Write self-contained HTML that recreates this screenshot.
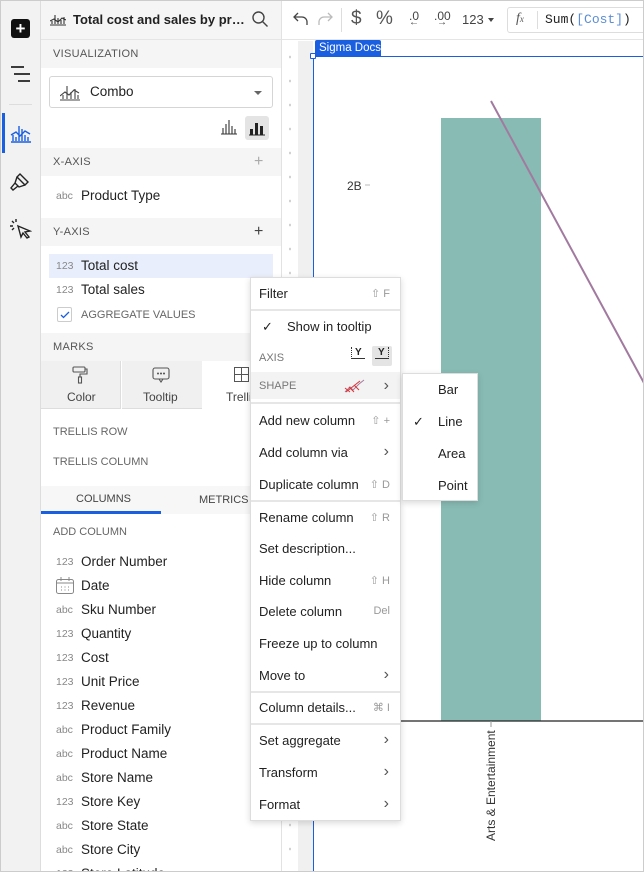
<!DOCTYPE html>
<html><head><meta charset="utf-8"><style>
*{box-sizing:border-box;margin:0;padding:0}
body{width:644px;height:872px;overflow:hidden;font-family:"Liberation Sans",sans-serif;color:#222;background:#fff;position:relative}
.abs{position:absolute}
.rail{left:0;top:0;width:41px;height:872px;background:#f2f2f2;border-right:1px solid #ddd}
.panel{left:41px;top:0;width:241px;height:872px;background:#fff;border-right:1px solid #e2e2e2;overflow:hidden}
.hdr{background:#f5f5f5;font-size:11px;color:#555;letter-spacing:.3px;padding-left:12px;display:flex;align-items:center;position:absolute;left:0;width:240px;height:28px}
.t{position:absolute;font-size:13px;white-space:nowrap}
.ty{position:absolute;font-size:10.5px;color:#888;white-space:nowrap}
.menu{left:250px;top:277px;width:151px;height:544px;background:#fff;border:1px solid #ddd;box-shadow:0 2px 6px rgba(0,0,0,.15)}
.mi{position:absolute;left:8px;font-size:13px;white-space:nowrap;color:#222}
.sc{position:absolute;right:10px;font-size:11px;color:#999}
.ch{position:absolute;right:11px;font-size:16px;color:#555}
.sep{position:absolute;left:0;width:149px;height:2px;background:#e6e6e6}
.sub{left:402px;top:373px;width:76px;height:128px;background:#fff;border:1px solid #ddd;box-shadow:0 2px 6px rgba(0,0,0,.15)}
</style></head><body>
<div class="abs rail"></div>
<div class="abs" style="left:11px;top:19px;width:19px;height:19px;background:#111;border-radius:3px;color:#fff;font-size:17px;font-weight:bold;line-height:19px;text-align:center">+</div>
<svg class="abs" style="left:10px;top:66px" width="22" height="16"><path d="M1 1h13M4 8h16M8 15h12" stroke="#222" stroke-width="1.8"/></svg>
<div class="abs" style="left:9px;top:104px;width:23px;height:1px;background:#ddd"></div>
<div class="abs" style="left:2px;top:113px;width:3px;height:40px;background:#1a5fe0"></div>
<svg class="abs" style="left:10px;top:123px" width="22" height="20" fill="none" stroke="#1a5fe0" stroke-width="1.4"><path d="M1 19h20M3 18v-6M6 18v-4M9 18V3M12 18V6M15 18v-6M18 18v-4M1 12l5-3 4 4 5-5 5 3"/></svg>
<svg class="abs" style="left:10px;top:172px" width="20" height="20" fill="none" stroke="#222" stroke-width="1.4"><path d="M10 2l8 8-3 3-8-8zM7 5l-2 6 4 4 6-2M5 11l-4 5 2 2 5-4"/></svg>
<svg class="abs" style="left:10px;top:219px" width="22" height="20" fill="none" stroke="#222" stroke-width="1.4"><path d="M8 7l12 5-5 1 4 5-2 1-4-5-2 4z M2 2l2 2M6 0v3M0 7h3M2 11l2-2"/></svg>

<div class="abs panel">
  <div class="abs" style="left:0;top:0;width:240px;height:40px;background:#f5f5f5;border-bottom:1px solid #e5e5e5"></div>
  <svg class="abs" style="left:9px;top:12px" width="16" height="14" fill="none" stroke="#333" stroke-width="1.1"><path d="M0 13h16M2 12V9M5 12V3M8 12V6M11 12V8M14 12V5M0 9l4-2 4 3 4-4 4 2"/></svg>
  <div class="t" style="left:32px;top:12px;font-weight:bold;font-size:13px;width:172px;overflow:hidden;text-overflow:ellipsis">Total cost and sales by product type</div>
  <svg class="abs" style="left:211px;top:11px" width="16" height="16" fill="none" stroke="#444" stroke-width="1.4"><circle cx="6.5" cy="6.5" r="5.5"/><path d="M10.5 10.5l5 5"/></svg>
  <div class="hdr" style="top:40px">VISUALIZATION</div>
  <div class="abs" style="left:8px;top:76px;width:224px;height:32px;border:1px solid #d5d5d5;border-radius:3px"></div>
  <svg class="abs" style="left:19px;top:83px" width="20" height="18" fill="none" stroke="#444" stroke-width="1.1"><path d="M0 17h20M3 16v-4M7 16V3M11 16V9M15 16V6M18 16v-4M0 13l5-4 4 3 5-5 5 3"/></svg>
  <div class="t" style="left:49px;top:84px;font-size:13.5px">Combo</div>
  <div class="abs" style="left:213px;top:91px;border:4px solid transparent;border-top:4px solid #666"></div>
  <svg class="abs" style="left:180px;top:119px" width="16" height="16" fill="none" stroke="#333" stroke-width="1.1"><path d="M0 15h16M2 15V9M5 15V5M8 15V1M11 15V7M14 15V10"/></svg>
  <div class="abs" style="left:204px;top:116px;width:24px;height:24px;background:#e4e4e4;border-radius:3px"></div>
  <svg class="abs" style="left:208px;top:120px" width="16" height="16"><path d="M0 15h16" stroke="#222"/><rect x="1" y="9" width="3" height="6" fill="#222"/><rect x="6" y="3" width="3" height="12" fill="#222"/><rect x="11" y="6" width="3" height="9" fill="#222"/></svg>
  <div class="hdr" style="top:148px">X-AXIS</div>
  <div class="t" style="left:213px;top:153px;color:#aaa;font-size:16px">+</div>
  <div class="ty" style="left:15px;top:190px">abc</div>
  <div class="t" style="left:40px;top:188px;font-size:13.5px">Product Type</div>
  <div class="hdr" style="top:218px">Y-AXIS</div>
  <div class="t" style="left:213px;top:223px;color:#444;font-size:16px">+</div>
  <div class="abs" style="left:8px;top:254px;width:224px;height:24px;background:#e8eefb"></div>
  <div class="ty" style="left:15px;top:260px">123</div>
  <div class="t" style="left:40px;top:258px;font-size:13.5px">Total cost</div>
  <div class="ty" style="left:15px;top:284px">123</div>
  <div class="t" style="left:40px;top:282px;font-size:13.5px">Total sales</div>
  <div class="abs" style="left:16px;top:307px;width:15px;height:15px;border:1px solid #ccc;border-radius:2px"></div>
  <svg class="abs" style="left:19px;top:311px" width="10" height="8"><path d="M1 4l2.5 2.5L9 1" stroke="#1a5fe0" fill="none" stroke-width="1.3"/></svg>
  <div class="ty" style="left:40px;top:309px;color:#666;font-size:11px">AGGREGATE VALUES</div>
  <div class="hdr" style="top:333px">MARKS</div>
  <div class="abs" style="left:0;top:361px;width:80px;height:48px;background:#f0f0f0;border-right:1px solid #ddd;border-bottom:1px solid #ddd"></div>
  <div class="abs" style="left:81px;top:361px;width:80px;height:48px;background:#f0f0f0;border-bottom:1px solid #ddd"></div>
  <svg class="abs" style="left:31px;top:366px" width="16" height="18" fill="none" stroke="#555" stroke-width="1.1"><rect x="1" y="1" width="12" height="5" rx="1"/><path d="M13 3h2v5H8v3"/><rect x="6.5" y="11" width="3" height="6"/></svg>
  <div class="t" style="left:26px;top:390px;font-size:12px;color:#444">Color</div>
  <svg class="abs" style="left:111px;top:367px" width="18" height="16" fill="none" stroke="#555" stroke-width="1.1"><rect x="1" y="1" width="16" height="11" rx="2"/><path d="M7 12l2 3 2-3"/><circle cx="6" cy="6.5" r=".5"/><circle cx="9" cy="6.5" r=".5"/><circle cx="12" cy="6.5" r=".5"/></svg>
  <div class="t" style="left:102px;top:390px;font-size:12px;color:#444">Tooltip</div>
  <svg class="abs" style="left:193px;top:367px" width="15" height="15" fill="none" stroke="#555" stroke-width="1"><rect x=".5" y=".5" width="14" height="14"/><path d="M7.5 0v15M0 7.5h15"/></svg>
  <div class="t" style="left:185px;top:390px;font-size:12px;color:#444">Trellis</div>
  <div class="ty" style="left:12px;top:426px;font-size:11px;color:#666">TRELLIS ROW</div>
  <div class="ty" style="left:12px;top:456px;font-size:11px;color:#666">TRELLIS COLUMN</div>
  <div class="abs" style="left:0;top:486px;width:240px;height:28px;background:#f7f7f7"></div>
  <div class="ty" style="left:35px;top:493px;font-size:11px;color:#444">COLUMNS</div>
  <div class="ty" style="left:158px;top:494px;font-size:11px;color:#444">METRICS</div>
  <div class="abs" style="left:0;top:511px;width:120px;height:3px;background:#1a5fe0"></div>
  <div class="ty" style="left:12px;top:526px;font-size:11px;color:#666">ADD COLUMN</div>
  <div class="ty" style="left:15px;top:556px">123</div><div class="t" style="left:40px;top:554px;font-size:13.5px">Order Number</div>
  <svg class="abs" style="left:15px;top:577px" width="18" height="17" fill="none" stroke="#888" stroke-width="1"><rect x=".5" y="2.5" width="17" height="14" rx="2"/><path d="M0 6h18M5 0v4M13 0v4"/><path d="M5 10h1M8.5 10h1M12 10h1M5 13h1M8.5 13h1M12 13h1"/></svg>
  <div class="t" style="left:40px;top:578px;font-size:13.5px">Date</div>
  <div class="ty" style="left:15px;top:604px">abc</div><div class="t" style="left:40px;top:602px;font-size:13.5px">Sku Number</div>
  <div class="ty" style="left:15px;top:628px">123</div><div class="t" style="left:40px;top:626px;font-size:13.5px">Quantity</div>
  <div class="ty" style="left:15px;top:652px">123</div><div class="t" style="left:40px;top:650px;font-size:13.5px">Cost</div>
  <div class="ty" style="left:15px;top:676px">123</div><div class="t" style="left:40px;top:674px;font-size:13.5px">Unit Price</div>
  <div class="ty" style="left:15px;top:700px">123</div><div class="t" style="left:40px;top:698px;font-size:13.5px">Revenue</div>
  <div class="ty" style="left:15px;top:724px">abc</div><div class="t" style="left:40px;top:722px;font-size:13.5px">Product Family</div>
  <div class="ty" style="left:15px;top:748px">abc</div><div class="t" style="left:40px;top:746px;font-size:13.5px">Product Name</div>
  <div class="ty" style="left:15px;top:772px">abc</div><div class="t" style="left:40px;top:770px;font-size:13.5px">Store Name</div>
  <div class="ty" style="left:15px;top:796px">123</div><div class="t" style="left:40px;top:794px;font-size:13.5px">Store Key</div>
  <div class="ty" style="left:15px;top:820px">abc</div><div class="t" style="left:40px;top:818px;font-size:13.5px">Store State</div>
  <div class="ty" style="left:15px;top:844px">abc</div><div class="t" style="left:40px;top:842px;font-size:13.5px">Store City</div>
  <div class="ty" style="left:15px;top:868px">123</div><div class="t" style="left:40px;top:866px;font-size:13.5px">Store Latitude</div>
</div>

<div class="abs" style="left:282px;top:0;width:362px;height:40px;background:#fff;border-bottom:1px solid #e5e5e5"></div>
<svg class="abs" style="left:293px;top:11px" width="16" height="16" fill="none" stroke="#444" stroke-width="1.3"><path d="M5 2L1 6l4 4M1 6h8a5 5 0 015 5v3"/></svg>
<svg class="abs" style="left:317px;top:11px" width="16" height="16" fill="none" stroke="#bbb" stroke-width="1.3"><path d="M11 2l4 4-4 4M15 6H7a5 5 0 00-5 5v3"/></svg>
<div class="abs" style="left:341px;top:8px;width:1px;height:24px;background:#ddd"></div>
<div class="t" style="left:351px;top:8px;font-size:19px;color:#555;font-weight:300">$</div>
<div class="t" style="left:376px;top:8px;font-size:19px;color:#555">%</div>
<div class="t" style="left:409px;top:9px;font-size:12px;color:#444">.0</div><div class="t" style="left:409px;top:17px;font-size:10px;color:#444">←</div>
<div class="t" style="left:434px;top:9px;font-size:12px;color:#444">.00</div><div class="t" style="left:437px;top:17px;font-size:10px;color:#444">→</div>
<div class="t" style="left:462px;top:12px;font-size:13px;color:#444">123</div>
<div class="abs" style="left:488px;top:18px;border:3.5px solid transparent;border-top:4px solid #444"></div>
<div class="abs" style="left:507px;top:7px;width:140px;height:26px;border:1px solid #ddd;border-radius:3px"></div>
<div class="t" style="left:516px;top:11px;font-size:14px;color:#555;font-family:'Liberation Serif',serif;font-style:italic">f<span style="font-size:9px">x</span></div>
<div class="abs" style="left:537px;top:11px;width:1px;height:18px;background:#ddd"></div>
<div class="t" style="left:545px;top:12px;font-family:'Liberation Mono',monospace;font-size:13px">Sum(<span style="color:#5b8dd6">[Cost]</span>)</div>

<div class="abs" style="left:282px;top:41px;width:16px;height:831px;background:#fff;background-image:radial-gradient(#ccc 0.8px,transparent 1px);background-size:16px 24px;background-position:0 4px"></div>
<div class="abs" style="left:298px;top:41px;width:15px;height:831px;background:#f0f0f0"></div>
<div class="abs" style="left:313px;top:56px;width:331px;height:816px;background:#fff;border-left:1px solid #1a5fe0;border-top:1px solid #1a5fe0"></div>
<div class="abs" style="left:315px;top:40px;width:66px;height:16px;background:#1a5fe0;border-radius:2px 2px 0 0;color:#fff;font-size:11.5px;line-height:16px;padding-left:4px">Sigma Docs</div>
<div class="abs" style="left:310px;top:53px;width:6px;height:6px;border:1px solid #1a5fe0;background:#fff;border-radius:1px"></div>
<svg class="abs" style="left:314px;top:57px" width="330" height="815">
<rect x="127" y="61" width="100" height="603" fill="#88bbb4"/>
<line x1="86" y1="664" x2="330" y2="664" stroke="#222" stroke-width="1.2"/>
<line x1="177" y1="44" x2="330" y2="326" stroke="#a27a9f" stroke-width="2"/>
<text x="33" y="133" font-size="12" fill="#333" font-family="Liberation Sans">2B</text>
<line x1="51" y1="128" x2="56" y2="128" stroke="#bbb"/>
<line x1="177" y1="664" x2="177" y2="670" stroke="#999"/>
<text transform="translate(181,784) rotate(-90)" font-size="12" fill="#333" font-family="Liberation Sans">Arts &amp; Entertainment</text>
</svg>

<div class="abs menu">
  <div class="mi" style="top:8px">Filter</div><div class="sc" style="top:9px">⇧ F</div>
  <div class="sep" style="top:31px"></div>
  <div class="mi" style="top:41px;left:11px">✓</div><div class="mi" style="top:41px;left:36px">Show in tooltip</div>
  <div class="mi" style="top:74px;font-size:11px;color:#777">AXIS</div>
  <div class="abs" style="left:100px;top:69px;font-size:10px;font-weight:bold;border-bottom:1.5px solid #333;border-left:1px dotted #333;padding:0 3px">Y</div>
  <div class="abs" style="left:121px;top:68px;width:20px;height:20px;background:#e4e4e4;border-radius:2px"></div>
  <div class="abs" style="left:124px;top:69px;font-size:10px;font-weight:bold;border-bottom:1.5px solid #333;border-right:1px dotted #333;padding:0 3px">Y</div>
  <div class="abs" style="left:0;top:94px;width:149px;height:27px;background:#f3f3f3"></div>
  <div class="mi" style="top:102px;font-size:11px;color:#777">SHAPE</div>
  <svg class="abs" style="left:93px;top:101px" width="22" height="14" fill="none" stroke-width="1"><path d="M1 13l5-5 3 3 6-6 5-4" stroke="#a27a9f"/><path d="M1 9l5 4M5 8l5 5M10 6l5 5M2 13l14-11" stroke="#d33"/></svg>
  <div class="ch" style="top:99px">›</div>
  <div class="sep" style="top:124px"></div>
  <div class="mi" style="top:135px">Add new column</div><div class="sc" style="top:136px">⇧ +</div>
  <div class="mi" style="top:167px">Add column via</div><div class="ch" style="top:165px">›</div>
  <div class="mi" style="top:199px">Duplicate column</div><div class="sc" style="top:200px">⇧ D</div>
  <div class="sep" style="top:222px"></div>
  <div class="mi" style="top:232px">Rename column</div><div class="sc" style="top:233px">⇧ R</div>
  <div class="mi" style="top:263px">Set description...</div>
  <div class="mi" style="top:295px">Hide column</div><div class="sc" style="top:296px">⇧ H</div>
  <div class="mi" style="top:326px">Delete column</div><div class="sc" style="top:327px">Del</div>
  <div class="mi" style="top:358px">Freeze up to column</div>
  <div class="mi" style="top:390px">Move to</div><div class="ch" style="top:388px">›</div>
  <div class="sep" style="top:413px"></div>
  <div class="mi" style="top:422px">Column details...</div><div class="sc" style="top:423px">⌘ I</div>
  <div class="sep" style="top:445px"></div>
  <div class="mi" style="top:455px">Set aggregate</div><div class="ch" style="top:453px">›</div>
  <div class="mi" style="top:487px">Transform</div><div class="ch" style="top:485px">›</div>
  <div class="mi" style="top:519px">Format</div><div class="ch" style="top:517px">›</div>
</div>
<div class="abs sub">
  <div class="mi" style="top:8px;left:35px">Bar</div>
  <div class="mi" style="top:40px;left:10px">✓</div><div class="mi" style="top:40px;left:35px">Line</div>
  <div class="mi" style="top:72px;left:35px">Area</div>
  <div class="mi" style="top:104px;left:35px">Point</div>
</div>
<div class="abs" style="left:0;top:0;width:644px;height:872px;border:1px solid #ccc;pointer-events:none"></div>
</body></html>
